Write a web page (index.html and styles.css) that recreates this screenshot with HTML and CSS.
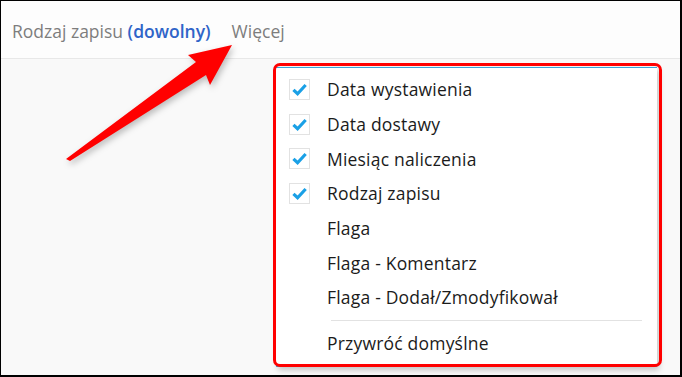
FILE: index.html
```html
<!DOCTYPE html>
<html lang="pl">
<head>
<meta charset="utf-8">
<link rel="stylesheet" href="styles.css">
</head>
<body>
<div class="frame">
  <div class="topbar">
    <span class="lbl">Rodzaj zapisu <b class="val">(dowolny)</b></span>
    <span class="lbl more">Więcej</span>
  </div>
  <div class="content">
    <div class="menu">
      <div class="item"><span class="cb"><svg viewBox="0 0 16 16" width="17" height="17"><path d="M2.3 8.3 L6.2 12 L13.8 3.8" fill="none" stroke="#1aa0e6" stroke-width="3"/></svg></span>Data wystawienia</div>
      <div class="item"><span class="cb"><svg viewBox="0 0 16 16" width="17" height="17"><path d="M2.3 8.3 L6.2 12 L13.8 3.8" fill="none" stroke="#1aa0e6" stroke-width="3"/></svg></span>Data dostawy</div>
      <div class="item"><span class="cb"><svg viewBox="0 0 16 16" width="17" height="17"><path d="M2.3 8.3 L6.2 12 L13.8 3.8" fill="none" stroke="#1aa0e6" stroke-width="3"/></svg></span>Miesiąc naliczenia</div>
      <div class="item"><span class="cb"><svg viewBox="0 0 16 16" width="17" height="17"><path d="M2.3 8.3 L6.2 12 L13.8 3.8" fill="none" stroke="#1aa0e6" stroke-width="3"/></svg></span>Rodzaj zapisu</div>
      <div class="item"><span class="cb empty"></span>Flaga</div>
      <div class="item"><span class="cb empty"></span>Flaga - Komentarz</div>
      <div class="item"><span class="cb empty"></span>Flaga - Dodał/Zmodyfikował</div>
      <div class="sep"></div>
      <div class="item last"><span class="cb empty"></span>Przywróć domyślne</div>
    </div>
    <div class="highlight"></div>
  </div>
  <svg class="arrow" width="682" height="377" viewBox="0 0 682 377">
    <polygon points="66,159 196,62 188,55 232,45 210,85 206,75 70,161" fill="#ff0000"/>
  </svg>
</div>
</body>
</html>
```
FILE: styles.css
```css
html, body {
  margin: 0;
  padding: 0;
}
body {
  width: 682px;
  height: 377px;
  overflow: hidden;
  font-family: "Open Sans", "Noto Sans", sans-serif;
}
.frame {
  position: relative;
  box-sizing: border-box;
  width: 682px;
  height: 377px;
  border-style: solid;
  border-color: #000;
  border-width: 1px 2px 2px 1px;
  background: #f9f9f9;
  display: flex;
  flex-direction: column;
}
.topbar {
  height: 58px;
  background: #fdfdfd;
  border-bottom: 1px solid #e8e8e8;
  display: flex;
  align-items: center;
  padding-left: 11px;
  gap: 21px;
  box-sizing: border-box;
  padding-top: 2px;
}
.lbl {
  font-size: 17.5px;
  color: #7d7d7d;
}
.val {
  color: #2f64c8;
  font-weight: 600;
}
.content {
  flex: 1;
  position: relative;
}
.menu {
  position: absolute;
  left: 275px;
  top: 8px;
  width: 381px;
  background: #fff;
  border-top: 1px solid #3ba3d8;
  border-bottom: 2px solid #3ba3d8;
  box-shadow: 2px 3px 6px rgba(0,0,0,0.22);
  padding-top: 4px;
  padding-bottom: 4px;
}
.item {
  height: 34.7px;
  display: flex;
  align-items: center;
  font-size: 17.5px;
  letter-spacing: 0.2px;
  color: #1b1b1b;
}
.cb {
  width: 21px;
  height: 21px;
  margin-left: 13px;
  margin-right: 17px;
  box-sizing: border-box;
  border: 1px solid #e2e2e2;
  display: flex;
  align-items: center;
  justify-content: center;
}
.cb.empty {
  border-color: transparent;
}
.sep {
  height: 1px;
  background: #e2e2e2;
  margin: 5px 15px 5px 55px;
}
.highlight {
  position: absolute;
  left: 272px;
  top: 4px;
  width: 389px;
  height: 304px;
  box-sizing: border-box;
  border: 3px solid #ff0000;
  border-radius: 7px;
}
.arrow {
  position: absolute;
  left: -1px;
  top: -1px;
  filter: drop-shadow(2px 3px 3px rgba(0,0,0,0.25));
}
```
